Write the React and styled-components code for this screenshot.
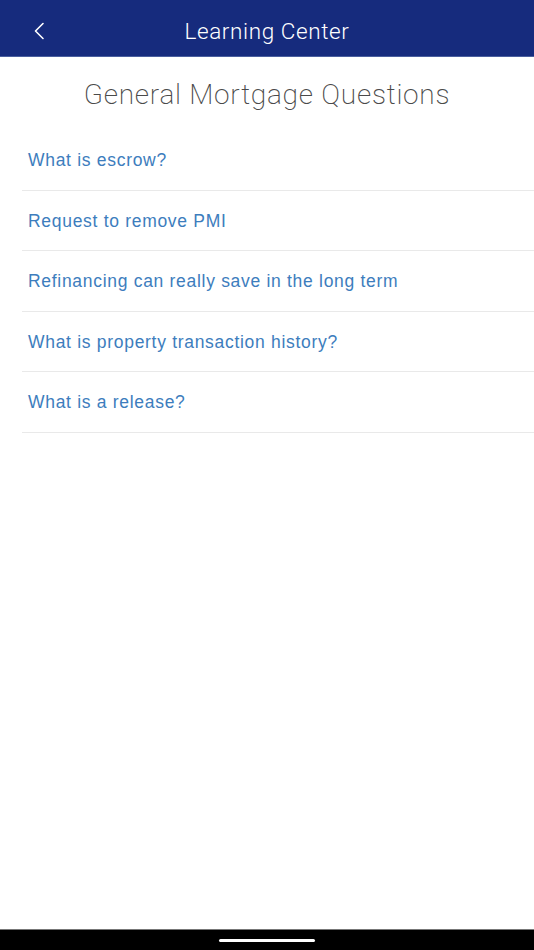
import styled, { createGlobalStyle } from "styled-components";

const GlobalStyle = createGlobalStyle`
  html, body {
    margin: 0;
    padding: 0;
    background: #ffffff;
  }
  #root {
    height: 950px;
  }
`;

const Screen = styled.div`
  width: 534px;
  height: 950px;
  display: flex;
  flex-direction: column;
  background: #ffffff;
  overflow: hidden;
`;

const Header = styled.header`
  height: 57px;
  flex-shrink: 0;
  background: #162b7d;
  border-bottom: 1px solid #4a5f9e;
  box-sizing: border-box;
  display: grid;
  grid-template-columns: 70px 1fr 70px;
  align-items: center;
  padding-top: 5px;
`;

const BackButton = styled.button`
  background: none;
  border: none;
  padding: 0 0 0 33px;
  height: 100%;
  display: flex;
  align-items: center;
  cursor: pointer;
`;

const HeaderTitle = styled.h1`
  margin: 0;
  text-align: center;
  color: #ffffff;
  font-family: Roboto, "Noto Sans", sans-serif;
  font-weight: 300;
  font-size: 22.5px;
  letter-spacing: 0.6px;
`;

const Content = styled.main`
  flex: 1;
  display: flex;
  flex-direction: column;
`;

const SectionTitle = styled.h2`
  margin: 0;
  padding: 21px 0 0;
  height: 73px;
  box-sizing: border-box;
  text-align: center;
  color: #4a4a4a;
  font-family: Roboto, "Noto Sans", sans-serif;
  font-weight: 200;
  font-size: 28px;
  letter-spacing: 0.75px;
`;

const List = styled.ul`
  list-style: none;
  margin: 0;
  padding: 0 0 0 22px;
`;

const Item = styled.li`
  height: 60.5px;
  box-sizing: border-box;
  border-bottom: 1px solid #e9e9e9;
  display: flex;
  align-items: center;
  padding: 2px 0 0 6px;
  color: #3d7dbd;
  font-family: "Liberation Sans", Arial, sans-serif;
  font-size: 17.5px;
  letter-spacing: 0.7px;
  cursor: pointer;
`;

const BottomBar = styled.div`
  height: 20px;
  flex-shrink: 0;
  background: #000000;
  border-top: 1px solid #777777;
  display: flex;
  justify-content: center;
  align-items: center;
`;

const HomeIndicator = styled.div`
  width: 96px;
  height: 3px;
  border-radius: 2px;
  background: #ffffff;
`;

const questions = [
  "What is escrow?",
  "Request to remove PMI",
  "Refinancing can really save in the long term",
  "What is property transaction history?",
  "What is a release?",
];

export default function App() {
  return (
    <Screen>
      <GlobalStyle />
      <Header>
        <BackButton aria-label="Back">
          <svg width="12" height="18" viewBox="0 0 12 18">
            <path
              d="M10 1.5 L2.5 9 L10 16.5"
              fill="none"
              stroke="#ffffff"
              strokeWidth="1.6"
              strokeLinecap="round"
              strokeLinejoin="round"
            />
          </svg>
        </BackButton>
        <HeaderTitle>Learning Center</HeaderTitle>
        <span />
      </Header>
      <Content>
        <SectionTitle>General Mortgage Questions</SectionTitle>
        <List>
          {questions.map((q) => (
            <Item key={q}>{q}</Item>
          ))}
        </List>
      </Content>
      <BottomBar>
        <HomeIndicator />
      </BottomBar>
    </Screen>
  );
}
